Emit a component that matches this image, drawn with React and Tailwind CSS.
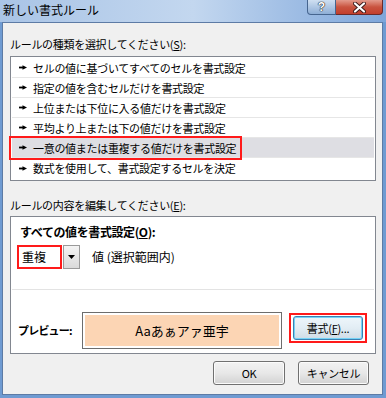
const rules = [
  'セルの値に基づいてすべてのセルを書式設定',
  '指定の値を含むセルだけを書式設定',
  '上位または下位に入る値だけを書式設定',
  '平均より上または下の値だけを書式設定',
  '一意の値または重複する値だけを書式設定',
  '数式を使用して、書式設定するセルを決定'
];

function Marker() {
  return (
    <svg width="8" height="5" viewBox="0 0 8 5" className="shrink-0">
      <rect x="0" y="1.6" width="4" height="1.8" fill="#000" />
      <polygon points="3.5,0.2 8,2.5 3.5,4.8" fill="#000" />
    </svg>
  );
}

function WinButton({ width, children }) {
  return (
    <div
      className={`flex h-[24px] ${width} items-center justify-center rounded-[3px] border border-[#707070] bg-linear-to-b from-[#f2f2f2] via-[#e8e8e8] to-[#d2d2d2] shadow-[inset_0_0_0_1px_#fbfbfb] text-[11px] tracking-[-0.3px]`}
    >
      {children}
    </div>
  );
}

export default function App() {
  return (
    <div className="flex h-[398px] w-[386px] flex-col bg-[#6f9bd2] font-['Noto_Sans_CJK_JP',sans-serif] text-black">
      {/* title bar */}
      <div className="flex h-[22px] shrink-0 items-start bg-linear-to-r from-[#a9c4e6] via-[#c3d7ef] to-[#7ea6da]">
        <span className="pl-[3px] pt-[2px] text-[12px] leading-[16px]">新しい書式ルール</span>
        <div className="ml-auto mr-[3px] flex h-[15px]">
          <div className="flex w-[29px] items-center justify-center rounded-bl-[4px] border border-t-0 border-[#46658f] bg-linear-to-b from-[#cfdff1] to-[#8eaed6] font-['Liberation_Sans',sans-serif] text-[12px] font-bold leading-[14px] text-white [text-shadow:0_0_1px_#222,0_0_1px_#222,0_0_1px_#222]">
            ?
          </div>
          <div className="flex w-[47px] items-center justify-center rounded-br-[4px] border border-l-0 border-t-0 border-[#6a2a2a] bg-linear-to-b from-[#e39a8c] via-[#c9533f] to-[#c23e2c]">
            <svg width="13" height="11" viewBox="0 0 13 11">
              <path d="M2 1.5L11 9.5M11 1.5L2 9.5" stroke="#3a1a1a" strokeWidth="4" strokeLinecap="round" />
              <path d="M2 1.5L11 9.5M11 1.5L2 9.5" stroke="#fff" strokeWidth="2.2" strokeLinecap="round" />
            </svg>
          </div>
        </div>
      </div>

      {/* client area */}
      <div className="mb-[3px] ml-[2px] mr-[3px] flex flex-1 flex-col border border-[#5d7ba5] bg-[#f0f0f0] pl-[7px] pr-[6px] pt-[13px]">
        <div className="h-[16px] text-[11px] leading-[16px] tracking-[-0.3px]">
          ルールの種類を選択してください(<u>S</u>):
        </div>

        <div className="relative mt-[4px] h-[125px] border border-[#828790] bg-white px-[1px] pt-[1px]">
          {rules.map((rule, i) => (
            <div
              key={rule}
              className={`flex h-[20px] items-center pl-[7px] ${i < rules.length - 1 ? 'border-b border-[#e6e6e6]' : ''} ${i === 4 ? 'bg-[#dedee3]' : ''}`}
            >
              <Marker />
              <span className="ml-[6px] text-[11px] leading-[16px] tracking-[-0.3px]">{rule}</span>
            </div>
          ))}
          <div className="absolute left-[-2px] top-[79px] h-[24px] w-[233px] border-2 border-[#ff1a1a]" />
        </div>

        <div className="mt-[16px] h-[16px] text-[11px] leading-[16px] tracking-[-0.3px]">
          ルールの内容を編集してください(<u>E</u>):
        </div>

        <div className="mt-[3px] flex h-[138px] flex-col border border-[#828790] bg-white">
          <div className="pl-[9px] pt-[7px] text-[12px] font-bold leading-[16px] tracking-[-0.4px]">
            すべての値を書式設定(<u>O</u>):
          </div>
          <div className="mt-[5px] flex h-[24px] items-center pl-[6px]">
            <div className="flex h-[24px] w-[45px] items-center border-2 border-[#ff1a1a] pl-[3px] text-[12px]">重複</div>
            <div className="ml-[1px] flex h-[24px] w-[17px] items-center justify-center border border-[#9a9a9a] bg-linear-to-b from-[#f4f4f4] to-[#dadada]">
              <svg width="7" height="4" viewBox="0 0 7 4">
                <polygon points="0,0 7,0 3.5,4" fill="#000" />
              </svg>
            </div>
            <span className="ml-[12px] text-[12px] leading-[16px]">値 (選択範囲内)</span>
          </div>

          <div className="mx-[1px] mt-[20px] h-px bg-[#e3e3e3]" />

          <div className="mt-[22px] flex h-[37px] items-center pl-[7px]">
            <span className="w-[64px] text-[11px] font-bold tracking-[-0.8px]">プレビュー:</span>
            <div className="h-[37px] w-[200px] border border-[#6d6d6d] p-[2px]">
              <div className="flex h-full items-center justify-center bg-[#fcd5b4] text-[13px]">Aaあぁアァ亜宇</div>
            </div>
            <div className="ml-[7px] mt-[1px] h-[30px] w-[78px] self-start border-2 border-[#ff1a1a] px-[2px] py-[1px]">
              <div className="flex h-full items-center justify-center rounded-[3px] border border-[#3c7fb1] bg-linear-to-b from-[#eef6fb] via-[#e2edf4] to-[#cfdce6] shadow-[inset_0_0_0_1px_#74d2f6] text-[11px] tracking-[-0.3px]">
                書式(<u>F</u>)...
              </div>
            </div>
          </div>
        </div>

        <div className="mt-[7px] flex justify-end gap-[13px] pr-[7px]">
          <WinButton width="w-[72px]">OK</WinButton>
          <WinButton width="w-[71px]">キャンセル</WinButton>
        </div>
      </div>
    </div>
  );
}
